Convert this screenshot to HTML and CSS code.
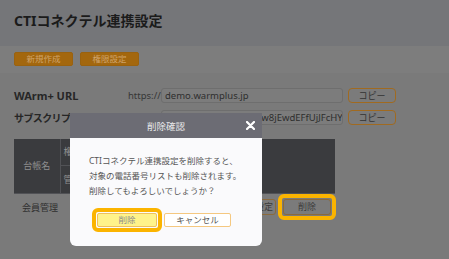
FILE: index.html
```html
<!DOCTYPE html>
<html lang="ja">
<head>
    <meta charset="UTF-8">
    <meta name="viewport" content="width=device-width, initial-scale=1.0">
    <title>CTIコネクテル連携設定</title>
    <link rel="stylesheet" href="styles.css">
</head>
<body>
    <header class="title-bar">
        <h1>CTIコネクテル連携設定</h1>
    </header>

    <div class="toolbar">
        <button class="btn-main">新規作成</button>
        <button class="btn-main">権限設定</button>
    </div>

    <main class="content">
        <div class="field-row">
            <span class="label">WArm+ URL</span>
            <span class="prefix">https://</span>
            <div class="field">demo.warmplus.jp</div>
            <button class="btn-copy">コピー</button>
        </div>
        <div class="field-row">
            <span class="label label-ja">サブスクリプションキー</span>
            <span class="prefix"></span>
            <div class="field field-key"><span>kQ2xR7tZp9aLm3VPqw8jEwdEFfUjJFcHYVb4Nc</span></div>
            <button class="btn-copy">コピー</button>
        </div>

        <table class="ledger">
            <tr>
                <th class="col-name head-top" rowspan="2">台帳名</th>
                <th class="col-group head-top">権限グループ</th>
                <th class="col-ops" rowspan="2"></th>
            </tr>
            <tr>
                <th class="col-group head-bottom">管理者</th>
            </tr>
            <tr class="body-row">
                <td class="cell-name">会員管理</td>
                <td></td>
                <td class="cell-ops">
                    <div class="ops">
                        <button class="btn-row btn-setting">権限設定</button>
                        <span class="focus-ring">
                            <button class="btn-row">削除</button>
                        </span>
                    </div>
                </td>
            </tr>
        </table>
    </main>

    <!-- delete confirmation dialog -->
    <div class="modal">
        <div class="modal-head">
            <span>削除確認</span>
            <svg class="modal-close" width="9" height="9" viewBox="0 0 9 9">
                <path d="M1 1 L8 8 M8 1 L1 8" stroke="#ffffff" stroke-width="2.2" stroke-linecap="round"/>
            </svg>
        </div>
        <div class="modal-body">
            <p>CTIコネクテル連携設定を削除すると、<br>対象の電話番号リストも削除されます。<br>削除してもよろしいでしょうか？</p>
            <div class="modal-actions">
                <span class="focus-ring">
                    <button class="btn-delete">削除</button>
                </span>
                <button class="btn-cancel">キャンセル</button>
            </div>
        </div>
    </div>
</body>
</html>
```

FILE: styles.css
```css
* {
    box-sizing: border-box;
}

body {
    margin: 0;
    width: 449px;
    height: 259px;
    overflow: hidden;
    position: relative;
    font-family: "Noto Sans", "Noto Sans CJK JP", sans-serif;
    background-color: #7a7a7a;
}

button {
    font-family: inherit;
    padding: 0;
    cursor: pointer;
}

.title-bar {
    height: 46px;
    background-color: #757679;
}

.title-bar h1 {
    margin: 0;
    padding: 0 14px;
    font-size: 14px;
    line-height: 42px;
    color: #1b1b1b;
}

.toolbar {
    height: 27px;
    padding: 6px 14px 0;
    display: flex;
    gap: 7px;
    background-color: #7d7d7d;
}

.btn-main {
    width: 59px;
    height: 14px;
    font-size: 8.5px;
    line-height: 12px;
    color: #cfa36a;
    background-color: #a3670e;
    border: 1px solid #9a620f;
    border-radius: 2px;
}

.content {
    padding: 15px 0 0 14px;
}

.field-row {
    display: flex;
    align-items: center;
    height: 15px;
    margin-bottom: 7px;
}

.label {
    width: 114px;
    font-size: 11px;
    font-weight: bold;
    color: #262626;
    white-space: nowrap;
}

.label-ja {
    font-size: 10px;
    letter-spacing: -0.6px;
}

.prefix {
    width: 33px;
    font-size: 9.5px;
    color: #363636;
}

.field {
    width: 182px;
    height: 15px;
    padding: 0 3px;
    font-size: 9.5px;
    line-height: 13px;
    color: #2e2e2e;
    border: 1px solid #6e6e6e;
    border-radius: 3px;
    background-color: #7c7c7c;
    overflow: hidden;
    white-space: nowrap;
}

.btn-copy {
    width: 48px;
    height: 15px;
    margin-left: 5px;
    font-size: 9px;
    line-height: 13px;
    color: #333;
    background-color: #7b7b7b;
    border: 1px solid #a06a20;
    border-radius: 4px;
}

/* ledger table */
.ledger {
    margin-top: 14px;
    width: 321px;
    border-collapse: collapse;
    border-style: hidden;
    font-size: 9px;
}

.ledger th {
    background-color: #3a3b3e;
    color: #8f8f8f;
    font-weight: normal;
    border: 1px solid #515256;
    padding: 0;
}

.col-name {
    width: 46px;
    text-align: center;
}

.col-group {
    text-align: left;
    padding-left: 3px !important;
    white-space: nowrap;
}

.col-ops {
    width: 110px;
}

.head-top {
    height: 26px;
}

.head-bottom {
    height: 28px;
}

.body-row td {
    height: 28px;
    padding: 0;
    color: #2f2f2f;
}

.cell-name {
    padding-left: 8px !important;
    white-space: nowrap;
}

.ops {
    display: flex;
    justify-content: flex-end;
    align-items: center;
    gap: 2px;
    margin-right: -1px;
}

.btn-row {
    width: 48px;
    height: 16px;
    font-size: 9px;
    line-height: 14px;
    color: #3c3c3c;
    background-color: #7b7b7b;
    border: 1px solid #8b6a3c;
    border-radius: 3px;
}

.btn-setting {
    width: auto;
    padding: 0 2px;
}

.focus-ring {
    display: inline-flex;
    padding: 1px;
    border: 4px solid #fbb400;
    border-radius: 6px;
}

/* modal */
.modal {
    position: absolute;
    left: 70px;
    top: 113px;
    width: 192px;
    height: 133px;
    border-radius: 0 0 6px 6px;
    background-color: #fafafc;
}

.modal-head {
    position: relative;
    height: 25px;
    display: flex;
    align-items: center;
    justify-content: center;
    background-color: #6c6c74;
    color: #e8e8ea;
    font-size: 9.5px;
}

.modal-close {
    position: absolute;
    right: 7px;
    top: 8px;
}

.modal-body {
    padding: 15px 10px 13px 19px;
}

.modal-body p {
    margin: 0;
    font-size: 8.5px;
    line-height: 15px;
    color: #555;
    white-space: nowrap;
}

.modal-actions {
    display: flex;
    align-items: center;
    gap: 2px;
    margin-top: 10px;
    padding-left: 3px;
}

.btn-delete {
    width: 60px;
    height: 14px;
    font-size: 8.5px;
    line-height: 12px;
    color: #8a8a8a;
    background-color: #fff38a;
    border: 1px solid #eec15e;
    border-radius: 2px;
}

.btn-cancel {
    width: 67px;
    height: 14px;
    font-size: 8.5px;
    line-height: 12px;
    color: #555;
    background-color: #fff;
    border: 1px solid #f5c880;
    border-radius: 2px;
}
```
